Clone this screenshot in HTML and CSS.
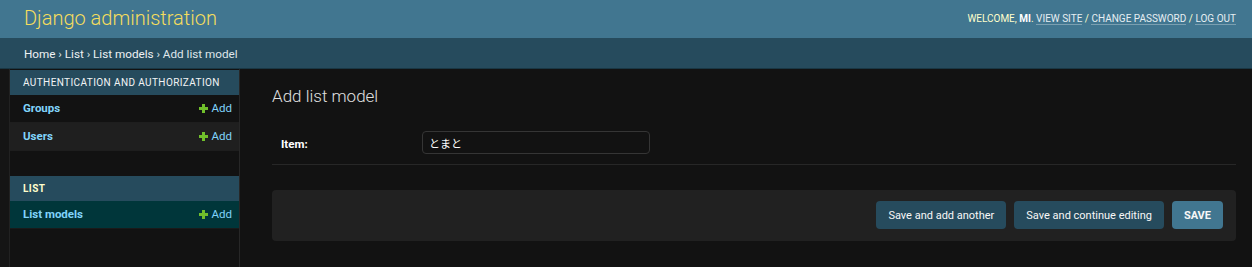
FILE: index.html
```html
<!DOCTYPE html>
<html lang="en">
<head>
    <meta charset="UTF-8">
    <meta name="viewport" content="width=device-width, initial-scale=1.0">
    <title>Add list model | Django site admin</title>
    <link rel="stylesheet" href="styles.css">
</head>
<body>

    <header class="header">
        <div class="branding">Django administration</div>
        <div class="user-tools">
            Welcome, <strong>mi</strong>.
            <a href="#">View site</a> /
            <a href="#">Change password</a> /
            <a href="#">Log out</a>
        </div>
    </header>

    <nav class="breadcrumbs">
        <a href="#">Home</a> &rsaquo; <a href="#">List</a> &rsaquo; <a href="#">List models</a> &rsaquo; Add list model
    </nav>

    <div class="main">
        <div class="toggle-nav"></div>

        <nav class="sidebar">
            <div class="module">
                <div class="caption">Authentication and Authorization</div>
                <div class="model-row">
                    <a class="model-link" href="#">Groups</a>
                    <a class="addlink" href="#"><span class="plus"></span>Add</a>
                </div>
                <div class="model-row even">
                    <a class="model-link" href="#">Users</a>
                    <a class="addlink" href="#"><span class="plus"></span>Add</a>
                </div>
            </div>

            <div class="module current-app">
                <div class="caption">List</div>
                <div class="model-row current-model">
                    <a class="model-link" href="#">List models</a>
                    <a class="addlink" href="#"><span class="plus"></span>Add</a>
                </div>
            </div>
        </nav>

        <div class="content">
            <h1>Add list model</h1>

            <form>
                <div class="form-row">
                    <label for="id_item">Item:</label>
                    <input type="text" id="id_item" value="とまと">
                </div>

                <div class="submit-row">
                    <button class="btn" type="button">Save and add another</button>
                    <button class="btn" type="button">Save and continue editing</button>
                    <button class="btn default" type="button">Save</button>
                </div>
            </form>
        </div>
    </div>

</body>
</html>
```

FILE: styles.css
```css
body {
    margin: 0;
    background: #121212;
    color: #eeeeee;
    font-family: Roboto, "Noto Sans CJK JP", sans-serif;
    font-size: 13px;
}

a {
    text-decoration: none;
}

.header {
    height: 38px;
    box-sizing: border-box;
    padding: 0 16px 2px 24px;
    background: #417690;
    display: flex;
    align-items: center;
    justify-content: space-between;
}

.branding {
    color: #f5dd5d;
    font-size: 20px;
    font-weight: 300;
}

.user-tools {
    color: #ffffcc;
    font-size: 10px;
    text-transform: uppercase;
}

.user-tools strong {
    color: #ffffff;
}

.user-tools a {
    color: #e6eef2;
    border-bottom: 1px solid rgba(255, 255, 255, 0.3);
}

.breadcrumbs {
    height: 31px;
    box-sizing: border-box;
    padding: 1px 24px 0;
    background: #264b5d;
    border-bottom: 1px solid #1a3744;
    color: #dfe6ea;
    font-size: 11.7px;
    line-height: 30px;
}

.breadcrumbs a {
    color: #eef2f4;
}

.main {
    display: flex;
    min-height: 198px;
}

.toggle-nav {
    width: 9px;
    background: #151515;
    border-right: 1px solid #222222;
}

.sidebar {
    width: 229px;
    border-right: 1px solid #272727;
    padding-top: 1px;
}

.module {
    margin-bottom: 25px;
}

.caption {
    height: 25px;
    box-sizing: border-box;
    padding: 0 13px;
    background: #264b5d;
    color: #f2f4f5;
    font-size: 10px;
    letter-spacing: 0.4px;
    white-space: nowrap;
    text-transform: uppercase;
    display: flex;
    align-items: center;
}

.current-app .caption {
    color: #ffffcc;
    font-weight: bold;
}

.model-row {
    height: 28px;
    box-sizing: border-box;
    padding: 0 7px 1px 13px;
    border-bottom: 1px solid #1e1e1e;
    display: flex;
    align-items: center;
    justify-content: space-between;
    font-size: 11.5px;
}

.model-row.even {
    background: #1f1f1f;
}

.model-row.current-model {
    background: #00363a;
    border-bottom-color: #1a1a1a;
}

.model-link {
    color: #81d4fa;
    font-weight: bold;
}

.addlink {
    color: #81d4fa;
    display: flex;
    align-items: center;
}

.plus {
    width: 9px;
    height: 9px;
    margin-right: 4px;
    background:
        linear-gradient(#70bf2b, #70bf2b) center / 9px 3px no-repeat,
        linear-gradient(#70bf2b, #70bf2b) center / 3px 9px no-repeat;
}

.content {
    flex: 1;
    padding: 16px 16px 0 32px;
}

h1 {
    margin: 0 0 16px;
    font-size: 17px;
    font-weight: 300;
    line-height: 22px;
    color: #e0e0e0;
}

.form-row {
    display: flex;
    align-items: center;
    padding: 8px 9px 10px 9px;
    border-bottom: 1px solid #272727;
}

.form-row label {
    width: 141px;
    padding-top: 3px;
    font-size: 11.5px;
    font-weight: bold;
    color: #ffffff;
}

.form-row input {
    width: 228px;
    height: 23px;
    box-sizing: border-box;
    padding: 2px 6px;
    background: #121212;
    border: 1px solid #353535;
    border-radius: 4px;
    color: #ffffff;
    font-family: Roboto, "Noto Sans CJK JP", sans-serif;
    font-size: 11px;
}

.submit-row {
    margin-top: 25px;
    padding: 11px 13px 12px;
    background: #212121;
    border-radius: 4px;
    display: flex;
    justify-content: flex-end;
    gap: 8px;
}

.btn {
    height: 28px;
    padding: 0 12px;
    background: #264b5d;
    color: #f7f7f7;
    border: none;
    border-radius: 4px;
    font-family: Roboto, sans-serif;
    font-size: 11px;
    cursor: pointer;
}

.btn.default {
    background: #417690;
    font-weight: bold;
    text-transform: uppercase;
}
```
